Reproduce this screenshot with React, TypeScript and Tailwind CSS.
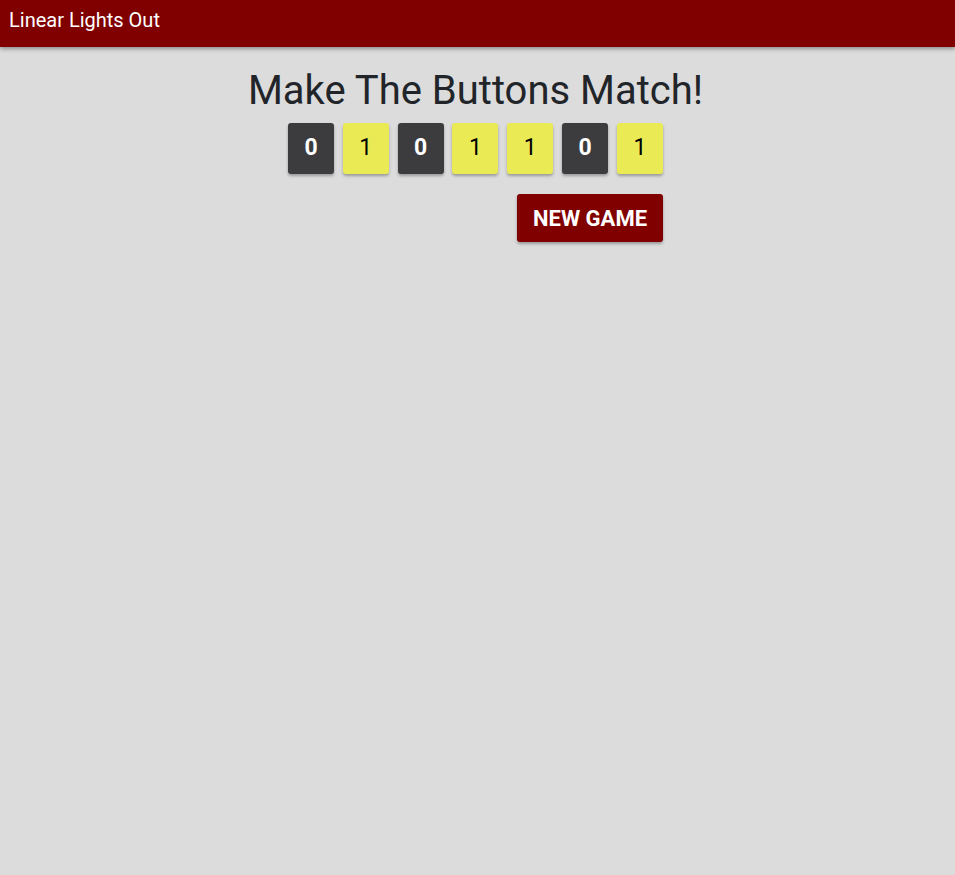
const board = [0, 1, 0, 1, 1, 0, 1];

export default function App() {
  return (
    <div className="min-h-screen bg-[#dcdcdc] font-['Roboto',sans-serif]">
      <header className="flex h-[47px] items-start bg-[#800000] px-[9px] pt-[10px] shadow-[0_2px_4px_rgba(0,0,0,0.35)]">
        <span className="text-[20px] leading-none text-white">Linear Lights Out</span>
      </header>
      <main className="flex justify-center pt-[20px]">
        <div className="mr-[4px] flex w-[375px] flex-col items-stretch">
          <h1 className="-mx-12 text-center text-[40px] leading-[48px] font-normal text-[#212529]">
            Make The Buttons Match!
          </h1>
          <div className="mt-[8px] flex justify-between">
            {board.map((v, i) => (
              <button
                key={i}
                className={
                  v === 0
                    ? "h-[51px] w-[46px] rounded-[3px] bg-[#3c3c3e] text-[23px] font-bold text-white shadow-[0_2px_3px_rgba(0,0,0,0.3)]"
                    : "h-[51px] w-[46px] rounded-[3px] bg-[#eaea55] text-[23px] font-normal text-black shadow-[0_2px_3px_rgba(0,0,0,0.3)]"
                }
              >
                {v}
              </button>
            ))}
          </div>
          <div className="mt-[20px] flex justify-end">
            <button className="h-[48px] w-[146px] rounded-[3px] bg-[#800000] text-[22px] font-bold text-white shadow-[0_2px_3px_rgba(0,0,0,0.3)]">
              NEW GAME
            </button>
          </div>
        </div>
      </main>
    </div>
  );
}
